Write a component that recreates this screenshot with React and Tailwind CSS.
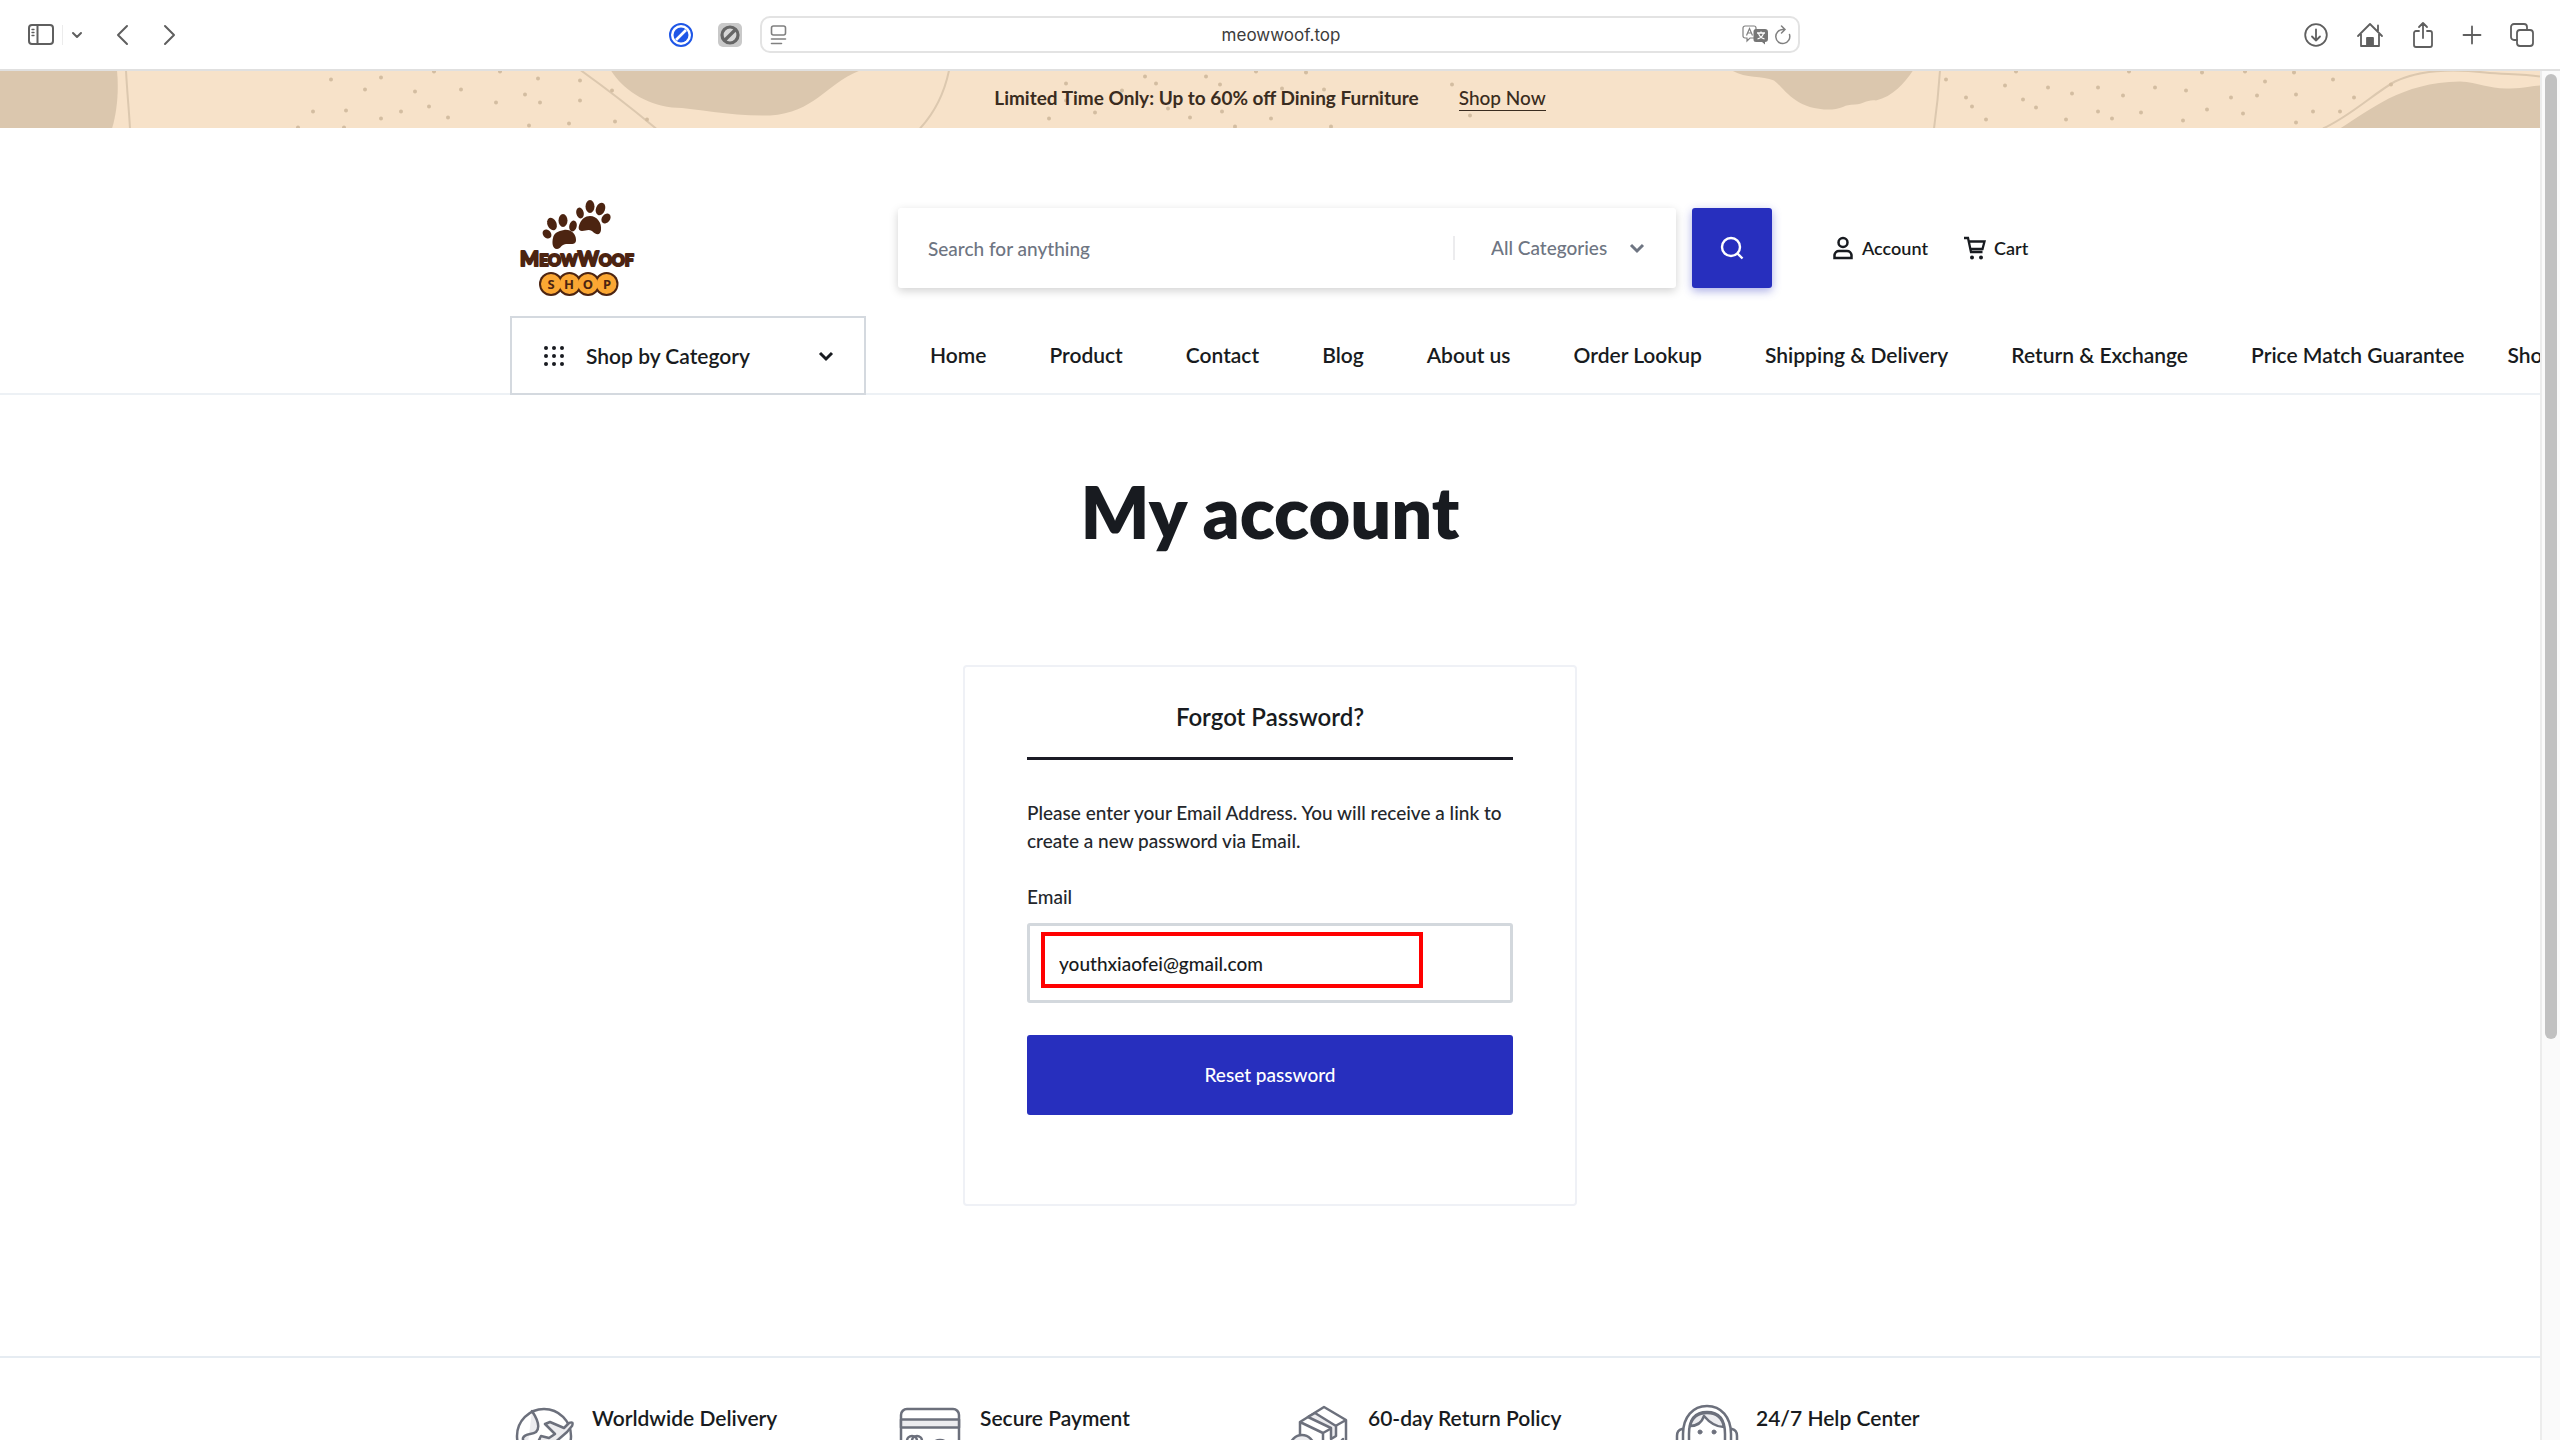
const NAV = ['Home', 'Product', 'Contact', 'Blog', 'About us', 'Order Lookup', 'Shipping & Delivery', 'Return & Exchange', 'Price Match Guarantee'];

const DOTS = [
  [331, 9], [381, 7], [365, 19], [415, 21], [461, 19], [434, 1], [313, 41], [346, 40], [401, 41], [429, 36], [381, 48], [448, 47],
  [298, 57], [344, 57], [500, 1], [538, 8], [580, 10], [525, 24], [496, 32], [540, 32], [580, 30], [612, 20], [569, 53], [529, 55], [615, 51], [647, 49],
  [1066, 13], [1145, 6], [1156, 13], [1206, 6], [1220, 14], [1256, 1], [1306, 2], [1066, 30], [1122, 20], [1168, 38], [1190, 47], [1222, 41],
  [1282, 18], [1324, 19], [1049, 48], [1095, 42], [1235, 56], [1271, 48], [1331, 56], [1380, 22], [1452, 14], [1470, 45],
  [1946, 9], [1966, 27], [1972, 36], [1986, 49], [2005, 15], [2016, 1], [2023, 29], [2036, 37], [2048, 17], [2072, 23], [2066, 49], [2098, 17],
  [2098, 41], [2112, 48], [2129, 1], [2123, 25], [2141, 42], [2155, 17], [2183, 50], [2186, 20], [2202, 2], [2207, 39], [2231, 27], [2243, 43],
  [2245, 1], [2257, 25], [2265, 11], [2294, 2], [2296, 24], [2296, 52], [2313, 41], [2333, 9], [2354, 27], [2340, 41], [2391, 14],
];

const stroke = { fill: 'none', stroke: 'currentColor', strokeLinecap: 'round', strokeLinejoin: 'round' };

function ChromeButton({ label, children, className = '' }) {
  return (
    <button type="button" aria-label={label} className={`flex items-center justify-center text-[#5f5f5f] ${className}`}>
      {children}
    </button>
  );
}

function BrowserBar() {
  return (
    <div className="grid h-[71px] shrink-0 grid-cols-[1fr_1040px_1fr] items-center border-b-2 border-[#e0e0e0] bg-white">
      <div className="flex items-center justify-between pl-7">
        <div className="flex items-center">
          <ChromeButton label="Sidebar">
            <svg width="26" height="22" viewBox="0 0 26 22" {...stroke} strokeWidth="2">
              <rect x="1" y="1" width="24" height="19" rx="3" />
              <path d="M9.500 1v19" />
              <path d="M4 5.500h2M4 8.500h2M4 11.500h2" strokeWidth="1.300" />
            </svg>
          </ChromeButton>
          <ChromeButton label="Sidebar options" className="ml-2 border-l border-[#ececec] py-1 pl-2">
            <svg width="12" height="12" viewBox="0 0 12 12" {...stroke} strokeWidth="2"><path d="M2 4l4 4 4-4" /></svg>
          </ChromeButton>
          <ChromeButton label="Back" className="ml-8">
            <svg width="14" height="22" viewBox="0 0 14 22" {...stroke} strokeWidth="2"><path d="M12 2L3 11l9 9" /></svg>
          </ChromeButton>
          <ChromeButton label="Forward" className="ml-[34px]">
            <svg width="14" height="22" viewBox="0 0 14 22" {...stroke} strokeWidth="2"><path d="M2 2l9 9-9 9" /></svg>
          </ChromeButton>
        </div>
        <div className="flex items-center gap-6 pr-[18px]">
          <ChromeButton label="Content blocker">
            <svg width="26" height="26" viewBox="0 0 26 26">
              <circle cx="13" cy="13" r="11" fill="none" stroke="#1f57e7" strokeWidth="2" />
              <circle cx="13" cy="13" r="7.500" fill="#1f57e7" />
              <path d="M8 18L18 8" stroke="#fff" strokeWidth="2.600" />
            </svg>
          </ChromeButton>
          <ChromeButton label="Extension">
            <svg width="24" height="24" viewBox="0 0 24 24">
              <rect width="24" height="24" rx="5" fill="#c9c9c9" />
              <circle cx="12" cy="12" r="8" fill="#d6d6d6" stroke="#666" strokeWidth="3.200" />
              <path d="M7 17L17 7" stroke="#666" strokeWidth="3.200" />
            </svg>
          </ChromeButton>
        </div>
      </div>
      <div className="flex h-[37px] items-center rounded-[10px] border-2 border-[#e3e3e3] pr-1.5 pl-2 text-[#808080]">
        <ChromeButton label="Page settings">
          <svg width="18" height="20" viewBox="0 0 18 20" fill="none" stroke="#808080" strokeWidth="1.600" strokeLinecap="round">
            <rect x="1.500" y="1" width="14" height="9" rx="2" />
            <path d="M1.500 14h14M1.500 18.500h10" />
          </svg>
        </ChromeButton>
        <input aria-label="Address" defaultValue="meowwoof.top" className="min-w-0 flex-1 bg-transparent pt-0.5 pl-8 text-center font-[Inter,sans-serif] text-[17px] text-[#3c3c3c] outline-none" />
        <ChromeButton label="Translate">
          <svg width="28" height="20" viewBox="0 0 28 20">
            <path d="M3 1h9a2 2 0 0 1 2 2v8a2 2 0 0 1-2 2H8l-3 3v-3H3a2 2 0 0 1-2-2V3a2 2 0 0 1 2-2z" fill="#fff" stroke="#808080" strokeWidth="1.200" />
            <path d="M4.500 10.500l3-7 3 7M5.500 8h4" fill="none" stroke="#808080" strokeWidth="1.200" />
            <path d="M14 4h9a3 3 0 0 1 3 3v7a3 3 0 0 1-3 3v2.500L20 17h-6a2.500 2.500 0 0 1-2.500-2.500v-8A2.500 2.500 0 0 1 14 4z" fill="#767676" />
            <path d="M15 8h8M19 6.500V8M16.500 8c.5 3 3 5 6 6M21.500 8c-.5 3-3 5-6 6" fill="none" stroke="#fff" strokeWidth="1.300" />
          </svg>
        </ChromeButton>
        <ChromeButton label="Reload" className="ml-1">
          <svg width="18" height="20" viewBox="0 0 18 20" fill="none" stroke="#808080" strokeWidth="1.500" strokeLinecap="round">
            <path d="M15.500 9.500A7 7 0 1 1 9 4.500h2M7.500 1l3.500 3.500L7.500 8" />
          </svg>
        </ChromeButton>
      </div>
      <div className="flex items-center justify-end gap-[26px] pr-[25px]">
        <ChromeButton label="Downloads">
          <svg width="26" height="26" viewBox="0 0 26 26" {...stroke} strokeWidth="1.800">
            <circle cx="13" cy="13" r="10.800" />
            <path d="M13 7.500v11M9 14.500l4 4 4-4" />
          </svg>
        </ChromeButton>
        <ChromeButton label="Home page">
          <svg width="30" height="26" viewBox="0 0 30 26" {...stroke} strokeWidth="1.800">
            <path d="M3 14L15 2l12 12M6 12v12h18V12M23 9V3.500" />
            <path d="M12 24v-8h6v8z" fill="currentColor" />
          </svg>
        </ChromeButton>
        <ChromeButton label="Share">
          <svg width="24" height="28" viewBox="0 0 24 28" {...stroke} strokeWidth="1.800">
            <path d="M8 10H5a2 2 0 0 0-2 2v12a2 2 0 0 0 2 2h14a2 2 0 0 0 2-2V12a2 2 0 0 0-2-2h-3M12 17V2M8 6l4-4 4 4" />
          </svg>
        </ChromeButton>
        <ChromeButton label="New tab">
          <svg width="22" height="22" viewBox="0 0 22 22" {...stroke} strokeWidth="1.800"><path d="M11 2.500v17M2.500 11h17" /></svg>
        </ChromeButton>
        <ChromeButton label="Tab overview">
          <svg width="26" height="26" viewBox="0 0 26 26" {...stroke} strokeWidth="1.800">
            <rect x="8" y="8" width="16" height="16" rx="3" />
            <path d="M8 18H5a3 3 0 0 1-3-3V5a3 3 0 0 1 3-3h10a3 3 0 0 1 3 3v3" />
          </svg>
        </ChromeButton>
      </div>
    </div>
  );
}

function PromoBanner() {
  return (
    <div className="relative flex h-[57px] items-center justify-center gap-10 bg-[#f7e2c9] pb-0.5 text-[19px] text-[#3a2c20]">
      <svg className="absolute inset-0 h-full w-full" viewBox="0 0 2540 58" preserveAspectRatio="xMidYMid slice" aria-hidden="true">
        <g fill="#dbc7ae">
          <path d="M0 0H117C119 20 117 42 112 58H0z" />
          <path d="M611 0C622 18 645 34 672 37C700 38 730 46 770 45C815 42 825 14 860 0z" />
          <path d="M1732 0C1745 8 1762 5 1774 10C1785 18 1795 40 1832 39C1844 38 1843 34 1855 34C1864 34 1866 29 1876 30C1893 26 1905 12 1913 0z" />
          <path d="M2340 58C2370 40 2400 12 2460 11C2480 12 2490 19 2510 18C2525 18 2532 15 2540 15V58z" />
        </g>
        <g fill="none" stroke="#dcc8af" strokeWidth="2">
          <path d="M126 0C127 20 129 40 130 58M581 0Q620 28 656 58M949 0Q942 34 920 58M1940 0Q1938 30 1934 58" />
          <path d="M2323 58C2350 46 2375 22 2395 11C2425 -3 2460 -1 2485 2C2505 4 2520 3 2540 6" />
        </g>
        <g fill="#d3bda1">
          {DOTS.map(([x, y]) => <circle key={`${x}-${y}`} cx={x} cy={y} r="2" />)}
        </g>
      </svg>
      <strong className="relative font-bold">Limited Time Only: Up to 60% off Dining Furniture</strong>
      <a href="#shop" className="relative border-b border-[#3a2c20] leading-[24px] font-medium">Shop Now</a>
    </div>
  );
}

function Logo() {
  return (
    <a href="#home" aria-label="MeowWoof Shop" className="ml-1.5 block w-[124px]">
      <svg width="124" height="104" viewBox="0 0 124 104">
        <g fill="#4c2411">
          <path d="M48 34C55 33 60 38 60 44C60 49 55 48 50 48C44 49 45 53 41 53C36 53 36 46 37 42C38 37 42 35 48 34z" />
          <ellipse cx="31" cy="38" rx="4" ry="5" transform="rotate(-40 31 38)" />
          <ellipse cx="36" cy="28" rx="4.500" ry="6.500" transform="rotate(-25 36 28)" />
          <ellipse cx="47" cy="24.500" rx="4.500" ry="6.500" />
          <ellipse cx="57" cy="30" rx="3.700" ry="5.500" transform="rotate(15 57 30)" />
          <path d="M74 20C81 20 86 27 85 34C84 41 79 38 76 35C72 33 70 35 66 35C62 35 62 31 64 27C66 23 69 20 74 20z" />
          <ellipse cx="64" cy="17" rx="3.700" ry="5.500" transform="rotate(-15 64 17)" />
          <ellipse cx="74" cy="10.500" rx="4.500" ry="6.500" />
          <ellipse cx="84.500" cy="13" rx="4.500" ry="6.500" transform="rotate(22 84.500 13)" />
          <ellipse cx="90" cy="22.500" rx="4" ry="5.500" transform="rotate(38 90 22.500)" />
          <circle cx="35" cy="88" r="12" /><circle cx="53.500" cy="88" r="12" /><circle cx="72" cy="88" r="12" /><circle cx="90.500" cy="88" r="12" />
        </g>
        <g fill="#fba733">
          <circle cx="35" cy="88" r="10" /><circle cx="53.500" cy="88" r="10" /><circle cx="72" cy="88" r="10" /><circle cx="90.500" cy="88" r="10" />
        </g>
        <text x="61" y="70" textAnchor="middle" fontFamily="Lato, sans-serif" fontWeight="900" fontSize="20" fill="#4c2411" stroke="#4c2411" strokeWidth="2" strokeLinejoin="round">
          M<tspan fontSize="16">EOW</tspan>W<tspan fontSize="16">OOF</tspan>
        </text>
        <g fontFamily="Noto Sans, sans-serif" fontWeight="700" fontSize="13" fill="#4c2411" textAnchor="middle">
          <text x="35" y="92.500">S</text><text x="53" y="92.500">H</text><text x="72" y="92.500">O</text><text x="91" y="92.500">P</text>
        </g>
      </svg>
    </a>
  );
}

function Chevron() {
  return (
    <svg width="16" height="16" viewBox="0 0 16 16" fill="none" stroke="currentColor" strokeWidth="3"><path d="M2 5l6 6 6-6" /></svg>
  );
}

function Header() {
  return (
    <header className="border-b-2 border-[#edf1f5] pt-[68px]">
      <div className="mx-auto w-full max-w-[1520px]">
        <div className="grid h-[104px] grid-cols-[388px_1fr_258px] items-center">
          <Logo />
          <form className="flex h-20 gap-4" role="search">
            <div className="flex flex-1 items-center rounded-[3px] bg-white text-[19px] text-[#6e7582] shadow-[0_3px_10px_rgba(0,0,0,0.18)]">
              <input aria-label="Search" placeholder="Search for anything" className="h-full min-w-0 flex-1 pl-[30px] font-medium outline-none placeholder:text-[#6e7582]" />
              <div className="relative flex h-6 items-center border-l-2 border-[#ececee] pr-[30px] pl-9">
                <select aria-label="Category" className="w-[155px] appearance-none bg-transparent font-medium outline-none">
                  <option>All Categories</option>
                </select>
                <span className="pointer-events-none absolute right-[31px]"><Chevron /></span>
              </div>
            </div>
            <button type="submit" aria-label="Search" className="flex w-20 items-center justify-center rounded-[3px] bg-[#272fbe] text-white shadow-[0_3px_10px_rgba(39,47,190,0.4)]">
              <svg width="24" height="24" viewBox="0 0 24 24" fill="none" stroke="currentColor" strokeWidth="2.400">
                <circle cx="11" cy="11" r="9" /><path d="M17 17l5.500 5.500" />
              </svg>
            </button>
          </form>
          <div className="flex items-center gap-9 pl-[60px] text-[18px] font-semibold">
            <a href="#account" className="flex items-center gap-2">
              <svg width="22" height="24" viewBox="0 0 22 24" fill="none" stroke="currentColor" strokeWidth="2.500">
                <circle cx="11" cy="6.500" r="4.500" /><path d="M2.500 22v-3a4.500 4.500 0 0 1 4.500-4h8a4.500 4.500 0 0 1 4.500 4v3z" />
              </svg>
              Account
            </a>
            <a href="#cart" className="flex items-center gap-2">
              <svg width="22" height="24" viewBox="0 0 22 24" fill="none" stroke="currentColor" strokeWidth="2.300">
                <path d="M0 2h4l3 14h11.500M5 5.500h15.500l-2 7.500H6.500" /><circle cx="8" cy="21.500" r="2" fill="currentColor" stroke="none" /><circle cx="17" cy="21.500" r="2" fill="currentColor" stroke="none" />
              </svg>
              Cart
            </a>
          </div>
        </div>
        <div className="mt-4 flex items-stretch">
          <button type="button" className="-mb-0.5 flex h-[79px] w-[356px] shrink-0 items-center border-2 border-[#d4d9df] pr-[30px] pl-8 text-[21px] font-semibold">
            <svg width="20" height="20" viewBox="0 0 20 20" fill="currentColor">
              {[2, 10, 18].map((y) => [2, 10, 18].map((x) => <circle key={`${x}-${y}`} cx={x} cy={y} r="2" />))}
            </svg>
            <span className="ml-[22px] flex-1 text-left">Shop by Category</span>
            <Chevron />
          </button>
          <nav className="flex items-center gap-[63px] pl-16 text-[21px] font-semibold whitespace-nowrap">
            {NAV.map((item) => <a key={item} href="#nav">{item}</a>)}
            <a href="#nav" className="-ml-5">Shop</a>
          </nav>
        </div>
      </div>
    </header>
  );
}

function ForgotPassword() {
  return (
    <form className="mx-auto mt-[102px] h-[541px] w-[614px] rounded-[4px] border-2 border-[#eff1f6] px-[62px] pt-8 text-[19px] font-medium">
      <h2 className="border-b-[3px] border-[#1b1b25] pt-0.5 pb-6 text-center text-[24px] leading-[32px] font-semibold">Forgot Password?</h2>
      <p className="mt-[39px] leading-[28px] text-[#24272c]">Please enter your Email Address. You will receive a link to create a new password via Email.</p>
      <label htmlFor="email" className="mt-7 block leading-[28px] text-[#24272c]">Email</label>
      <div className="relative mt-3">
        <input id="email" type="email" defaultValue="youthxiaofei@gmail.com" className="h-20 w-full rounded-[3px] border-[3px] border-[#d3d8dd] px-[29px] outline-none" />
        <div className="pointer-events-none absolute top-[9px] left-3.5 h-14 w-[382px] border-4 border-[#ff0000]" />
      </div>
      <button type="submit" className="mt-8 h-20 w-full rounded-[3px] bg-[#272fbe] text-white">Reset password</button>
    </form>
  );
}

const line = { fill: 'none', stroke: '#6c707c', strokeWidth: 2.5, strokeLinejoin: 'round', strokeLinecap: 'round' };

function GlobeIcon() {
  return (
    <svg width="62" height="64" viewBox="0 0 62 64" {...line}>
      <path d="M18 7C24 16 26 24 22 28C18 31 11 29 9 34C8 38 13 40 13 47" fill="#ececef" />
      <circle cx="30" cy="32" r="27" />
      <path d="M25 61C32 58 31 48 36 46" />
      <path d="M31 20L36 18L50 24L55 19Q60 17 58 22L53 28L30 48L26 44L31 40L25 36L27 32L35 34L41 30z" fill="#ececef" />
    </svg>
  );
}

function CardIcon() {
  return (
    <svg width="62" height="64" viewBox="5 0 62 64" className="overflow-visible" {...line}>
      <rect x="4" y="5" width="58" height="52" rx="6" />
      <path d="M4 15.500h58v8H4z" fill="#ececef" />
      <circle cx="15" cy="37" r="5" /><circle cx="20" cy="37" r="5" /><path d="M35 45v-3a8 6 0 0 1 16 0v3z" />
    </svg>
  );
}

function BoxIcon() {
  return (
    <svg width="62" height="64" viewBox="2 0 62 64" className="overflow-visible" {...line}>
      <path d="M12 18L36 3L58 16V48L35 61L12 48zM12 18L35 29L58 16M35 29V61" />
      <path d="M20 13L43 24V35L48 32V22L27 9z" fill="#ececef" />
      <path d="M47 44L55 35" />
      <circle cx="14" cy="43" r="12" fill="#ececef" />
    </svg>
  );
}

function HelpIcon() {
  return (
    <svg width="62" height="64" viewBox="3 0 62 64" className="overflow-visible" {...line}>
      <path d="M8 58V30C8 13 18 2 32 2S56 13 56 30V58" />
      <path d="M14 58V30C14 16 20 8 32 8S50 16 50 30V58" />
      <path d="M15 22C22 22 27 18 29 12C34 18 40 23 49 23C47 13 41 9 32 9C22 9 17 14 15 22z" fill="#ececef" />
      <path d="M7 25Q2 26 2 32v18h6M57 25q5 1 5 7v18h-6" />
      <circle cx="25" cy="28" r="2" fill="#6c707c" strokeWidth="1" /><circle cx="39" cy="28" r="2" fill="#6c707c" strokeWidth="1" />
    </svg>
  );
}

const SERVICES = [
  ['Worldwide Delivery', GlobeIcon],
  ['Secure Payment', CardIcon],
  ['60-day Return Policy', BoxIcon],
  ['24/7 Help Center', HelpIcon],
];

export default function App() {
  return (
    <div className="flex h-screen flex-col overflow-hidden bg-white font-[Lato,sans-serif] text-[#181b20]">
      <BrowserBar />
      <div className="flex min-h-0 flex-1">
        <div className="min-w-0 flex-1 overflow-hidden">
          <PromoBanner />
          <Header />
          <main className="pt-16 pb-[150px]">
            <h1 className="text-center text-[72px] leading-[104px] font-extrabold">My account</h1>
            <ForgotPassword />
          </main>
          <footer className="border-t-2 border-[#e6ecf2]">
            <div className="mx-auto grid w-full max-w-[1520px] grid-cols-[repeat(4,388px)] pt-[46px]">
              {SERVICES.map(([name, Icon]) => (
                <div key={name} className="flex gap-4 pl-1 text-[21px] leading-[28px] font-semibold">
                  <Icon />
                  <h3>{name}</h3>
                </div>
              ))}
            </div>
          </footer>
        </div>
        <div className="flex w-5 shrink-0 justify-center border-l-2 border-[#ececec] bg-[#fafafa] pt-[3px]">
          <div className="h-[965px] w-3 rounded-full bg-[#c1c1c1]" />
        </div>
      </div>
    </div>
  );
}
